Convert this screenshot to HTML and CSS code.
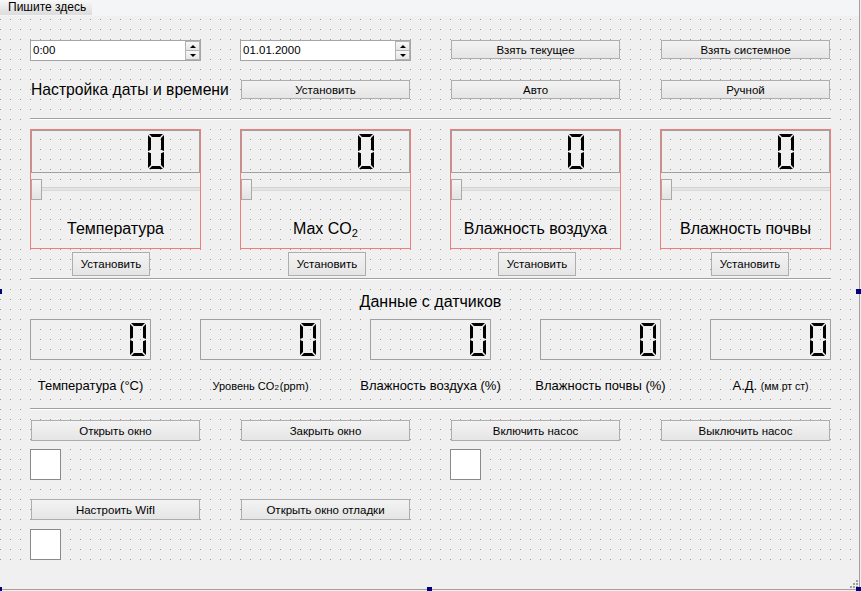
FILE: index.html
```html
<!DOCTYPE html>
<html lang="ru">
<head>
<meta charset="utf-8">
<title>Форма</title>
<link rel="stylesheet" href="styles.css">
</head>
<body>
<div class="window">
  <div class="menubar"><div class="menu-item">Пишите здесь</div></div>
  <div class="central">
    <div class="grid4 row-datetime">
      <div class="spin"><span class="spin-text">0:00</span><span class="spin-btns"><span class="spin-up"><i class="arr-up"></i></span><span class="spin-down"><i class="arr-down"></i></span></span></div>
      <div class="spin"><span class="spin-text">01.01.2000</span><span class="spin-btns"><span class="spin-up"><i class="arr-up"></i></span><span class="spin-down"><i class="arr-down"></i></span></span></div>
      <div class="btn">Взять текущее</div>
      <div class="btn">Взять системное</div>
    </div>
    <div class="grid4 row-settime">
      <div class="title-label">Настройка даты и времени</div>
      <div class="btn">Установить</div>
      <div class="btn">Авто</div>
      <div class="btn">Ручной</div>
    </div>
    <div class="sep sep-1"></div>
    <div class="grid4 row-groups">
      <div class="group">
        <div class="group-lcd"><svg class="digit digit-lg" viewBox="0 0 16 34" preserveAspectRatio="none"><path d="M1,0H15L12,3H4Z M1,34H15L12,31H4Z M0,1L3,4V15.3L0,16.6Z M0,17.4L3,18.7V30L0,33Z M16,1L13,4V15.3L16,16.6Z M16,17.4L13,18.7V30L16,33Z"/></svg></div>
        <div class="slider"><div class="groove"></div><div class="knob"></div></div>
        <div class="group-label">Температура</div>
      </div>
      <div class="group">
        <div class="group-lcd"><svg class="digit digit-lg" viewBox="0 0 16 34" preserveAspectRatio="none"><path d="M1,0H15L12,3H4Z M1,34H15L12,31H4Z M0,1L3,4V15.3L0,16.6Z M0,17.4L3,18.7V30L0,33Z M16,1L13,4V15.3L16,16.6Z M16,17.4L13,18.7V30L16,33Z"/></svg></div>
        <div class="slider"><div class="groove"></div><div class="knob"></div></div>
        <div class="group-label">Max CO<span class="sub">2</span></div>
      </div>
      <div class="group">
        <div class="group-lcd"><svg class="digit digit-lg" viewBox="0 0 16 34" preserveAspectRatio="none"><path d="M1,0H15L12,3H4Z M1,34H15L12,31H4Z M0,1L3,4V15.3L0,16.6Z M0,17.4L3,18.7V30L0,33Z M16,1L13,4V15.3L16,16.6Z M16,17.4L13,18.7V30L16,33Z"/></svg></div>
        <div class="slider"><div class="groove"></div><div class="knob"></div></div>
        <div class="group-label">Влажность воздуха</div>
      </div>
      <div class="group">
        <div class="group-lcd"><svg class="digit digit-lg" viewBox="0 0 16 34" preserveAspectRatio="none"><path d="M1,0H15L12,3H4Z M1,34H15L12,31H4Z M0,1L3,4V15.3L0,16.6Z M0,17.4L3,18.7V30L0,33Z M16,1L13,4V15.3L16,16.6Z M16,17.4L13,18.7V30L16,33Z"/></svg></div>
        <div class="slider"><div class="groove"></div><div class="knob"></div></div>
        <div class="group-label">Влажность почвы</div>
      </div>
    </div>
    <div class="grid4 row-set">
      <div class="btn set-btn set-1">Установить</div>
      <div class="btn set-btn set-2">Установить</div>
      <div class="btn set-btn set-3">Установить</div>
      <div class="btn set-btn set-4">Установить</div>
    </div>
    <div class="sep sep-2"></div>
    <div class="section-title">Данные с датчиков</div>
    <div class="grid5 row-lcd">
      <div class="lcd"><svg class="digit digit-sm" viewBox="0 0 16 34" preserveAspectRatio="none"><path d="M1,0H15L12,3H4Z M1,34H15L12,31H4Z M0,1L3,4V15.3L0,16.6Z M0,17.4L3,18.7V30L0,33Z M16,1L13,4V15.3L16,16.6Z M16,17.4L13,18.7V30L16,33Z"/></svg></div>
      <div class="lcd"><svg class="digit digit-sm" viewBox="0 0 16 34" preserveAspectRatio="none"><path d="M1,0H15L12,3H4Z M1,34H15L12,31H4Z M0,1L3,4V15.3L0,16.6Z M0,17.4L3,18.7V30L0,33Z M16,1L13,4V15.3L16,16.6Z M16,17.4L13,18.7V30L16,33Z"/></svg></div>
      <div class="lcd"><svg class="digit digit-sm" viewBox="0 0 16 34" preserveAspectRatio="none"><path d="M1,0H15L12,3H4Z M1,34H15L12,31H4Z M0,1L3,4V15.3L0,16.6Z M0,17.4L3,18.7V30L0,33Z M16,1L13,4V15.3L16,16.6Z M16,17.4L13,18.7V30L16,33Z"/></svg></div>
      <div class="lcd"><svg class="digit digit-sm" viewBox="0 0 16 34" preserveAspectRatio="none"><path d="M1,0H15L12,3H4Z M1,34H15L12,31H4Z M0,1L3,4V15.3L0,16.6Z M0,17.4L3,18.7V30L0,33Z M16,1L13,4V15.3L16,16.6Z M16,17.4L13,18.7V30L16,33Z"/></svg></div>
      <div class="lcd"><svg class="digit digit-sm" viewBox="0 0 16 34" preserveAspectRatio="none"><path d="M1,0H15L12,3H4Z M1,34H15L12,31H4Z M0,1L3,4V15.3L0,16.6Z M0,17.4L3,18.7V30L0,33Z M16,1L13,4V15.3L16,16.6Z M16,17.4L13,18.7V30L16,33Z"/></svg></div>
    </div>
    <div class="grid5 row-labels">
      <div class="data-label">Температура (°C)</div>
      <div class="data-label data-label-sm">Уровень CO<span class="sub-sm">2</span> (ppm)</div>
      <div class="data-label">Влажность воздуха (%)</div>
      <div class="data-label">Влажность почвы (%)</div>
      <div class="data-label">А.Д.&nbsp;<span class="unit-sm">(мм рт ст)</span></div>
    </div>
    <div class="sep sep-3"></div>
    <div class="grid4 row-actions1">
      <div class="btn btn-tall">Открыть окно</div>
      <div class="btn btn-tall">Закрыть окно</div>
      <div class="btn btn-tall">Включить насос</div>
      <div class="btn btn-tall">Выключить насос</div>
    </div>
    <div class="grid4 row-checks1">
      <div class="check"></div>
      <div></div>
      <div class="check"></div>
      <div></div>
    </div>
    <div class="grid4 row-actions2">
      <div class="btn btn-tall">Настроить WifI</div>
      <div class="btn btn-tall">Открыть окно отладки</div>
    </div>
    <div class="grid4 row-checks2">
      <div class="check"></div>
    </div>
  </div>
  <div class="statusbar">
    <svg class="grip" width="8" height="8" viewBox="0 0 8 8"><g fill="#a0a0a0"><rect x="6" y="0" width="2" height="2"/><rect x="3" y="3" width="2" height="2"/><rect x="6" y="3" width="2" height="2"/><rect x="0" y="6" width="2" height="2"/><rect x="3" y="6" width="2" height="2"/><rect x="6" y="6" width="2" height="2"/></g></svg>
  </div>
</div>
<div class="mark mark-lm"></div>
<div class="mark mark-rm"></div>
<div class="mark mark-lb"></div>
<div class="mark mark-mb"></div>
<div class="mark mark-rb"></div>
</body>
</html>
```
FILE: styles.css
```css
html, body {
  margin: 0;
  padding: 0;
}
body {
  position: relative;
  width: 861px;
  height: 591px;
  overflow: hidden;
  background: #f0f0f0;
  font-family: "Liberation Sans", Arial, sans-serif;
  color: #000;
}
.window {
  width: 859px;
  height: 589px;
  border-right: 1px solid #a0a0a0;
  border-bottom: 1px solid #a0a0a0;
  display: flex;
  flex-direction: column;
}
.menubar {
  flex: none;
  height: 16px;
  background: #f4f5f6;
}
.menu-item {
  width: 92px;
  height: 15px;
  box-sizing: border-box;
  padding-left: 8px;
  font-size: 12px;
  line-height: 15px;
  white-space: nowrap;
  background: linear-gradient(#f8f8f8, #dcdcdc);
}
.central {
  flex: 1;
  padding: 24px 0 0 30px;
  background-color: #f0f0f0;
  background-image: conic-gradient(from 270deg at 1px 1px, #9a9a9a 90deg, transparent 0);
  background-size: 10px 10px;
  background-position: 0 3px;
}
.grid4 {
  display: grid;
  grid-template-columns: repeat(4, 171px);
  column-gap: 39px;
  align-items: start;
}
.grid5 {
  display: grid;
  grid-template-columns: repeat(5, 121px);
  column-gap: 49px;
  align-items: start;
}
.btn {
  height: 19px;
  margin: 0 1px;
  box-sizing: border-box;
  border: 1px solid #adadad;
  background: linear-gradient(#f3f3f3, #e5e5e5);
  display: flex;
  align-items: center;
  justify-content: center;
  font-size: 11.5px;
  white-space: nowrap;
}
.btn-tall {
  height: 21px;
}
.spin {
  height: 21px;
  box-sizing: border-box;
  border: 1px solid #a5a5a5;
  background: #fff;
  display: flex;
}
.spin-text {
  flex: 1;
  padding-left: 2px;
  font-size: 11.5px;
  line-height: 19px;
}
.spin-btns {
  width: 15px;
  display: flex;
  flex-direction: column;
}
.spin-up, .spin-down {
  flex: 1;
  box-sizing: border-box;
  border: 1px solid #b4b4b4;
  background: linear-gradient(#f7f7f7, #e6e6e6);
  display: flex;
  align-items: center;
  justify-content: center;
}
.spin-down {
  border-top: none;
}
.arr-up {
  width: 0;
  height: 0;
  border-left: 3px solid transparent;
  border-right: 3px solid transparent;
  border-bottom: 3px solid #000;
}
.arr-down {
  width: 0;
  height: 0;
  border-left: 3px solid transparent;
  border-right: 3px solid transparent;
  border-top: 3px solid #000;
}
.row-settime {
  margin-top: 19px;
}
.title-label {
  font-size: 15.7px;
  line-height: 19px;
  white-space: nowrap;
  padding-left: 1px;
}
.sep {
  width: 801px;
  height: 2px;
  box-sizing: border-box;
  border-top: 1px solid #a0a0a0;
  border-bottom: 1px solid #ffffff;
}
.sep-1 { margin-top: 19px; }
.row-groups { margin-top: 9px; }
.group {
  height: 120px;
  box-sizing: border-box;
  border: 1px solid #f07c7c;
  display: flex;
  flex-direction: column;
}
.group-lcd {
  height: 43px;
  box-sizing: border-box;
  border: 1px solid #a0a0a0;
  display: flex;
  justify-content: flex-end;
  align-items: center;
  padding-right: 35px;
}
.digit {
  display: block;
  fill: #000;
}
.digit-lg {
  width: 16px;
  height: 35px;
}
.digit-sm {
  width: 16px;
  height: 33px;
}
.slider {
  position: relative;
  height: 21px;
  margin-top: 6px;
}
.groove {
  position: absolute;
  left: 0;
  right: 0;
  top: 8px;
  height: 4px;
  box-sizing: border-box;
  background: #e4e4e4;
  border-top: 1px solid #d2d2d2;
  border-bottom: 1px solid #d8d8d8;
}
.knob {
  position: absolute;
  left: 0;
  top: 0;
  width: 11px;
  height: 21px;
  box-sizing: border-box;
  border: 1px solid #a9a9a9;
  background: linear-gradient(#f5f5f5, #e3e3e3);
}
.group-label {
  margin-top: 19px;
  text-align: center;
  font-size: 16px;
  line-height: 19px;
  white-space: nowrap;
}
.sub {
  font-size: 11px;
  vertical-align: -3px;
}
.row-set { margin-top: 3px; }
.set-btn {
  width: 78px;
  height: 24px;
}
.set-1 { margin-left: 42px; }
.set-2 { margin-left: 48px; }
.set-3 { margin-left: 48px; }
.set-4 { margin-left: 51px; }
.sep-2 { margin-top: 2px; }
.section-title {
  width: 801px;
  margin-top: 12px;
  text-align: center;
  font-size: 16px;
  line-height: 19px;
}
.row-lcd { margin-top: 8px; }
.lcd {
  height: 41px;
  box-sizing: border-box;
  border: 1px solid #a0a0a0;
  display: flex;
  justify-content: flex-end;
  align-items: center;
  padding-right: 4px;
}
.row-labels {
  margin-top: 18px;
  height: 16px;
  align-items: baseline;
}
.data-label {
  display: flex;
  justify-content: center;
  align-items: baseline;
  white-space: nowrap;
  font-size: 13px;
  line-height: 16px;
}
.data-label-sm {
  font-size: 11px;
}
.sub-sm {
  font-size: 8px;
  margin-right: 1px;
}
.unit-sm {
  font-size: 10.5px;
}
.sep-3 { margin-top: 14px; }
.row-actions1 { margin-top: 10px; }
.check {
  width: 31px;
  height: 31px;
  box-sizing: border-box;
  border: 1px solid #8a8a8a;
  background: #fff;
}
.row-checks1 { margin-top: 8px; }
.row-actions2 { margin-top: 19px; }
.row-checks2 { margin-top: 9px; }
.statusbar {
  flex: none;
  height: 22px;
  display: flex;
  justify-content: flex-end;
  align-items: flex-end;
  padding: 0 1px 1px 0;
}
.grip {
  display: block;
}
.mark {
  position: absolute;
  width: 5px;
  height: 5px;
  background: #00007f;
}
.mark-lm { left: -3px; top: 289px; }
.mark-rm { left: 856px; top: 289px; }
.mark-lb { left: -3px; top: 587px; }
.mark-mb { left: 427px; top: 587px; }
.mark-rb { left: 856px; top: 587px; }
```
